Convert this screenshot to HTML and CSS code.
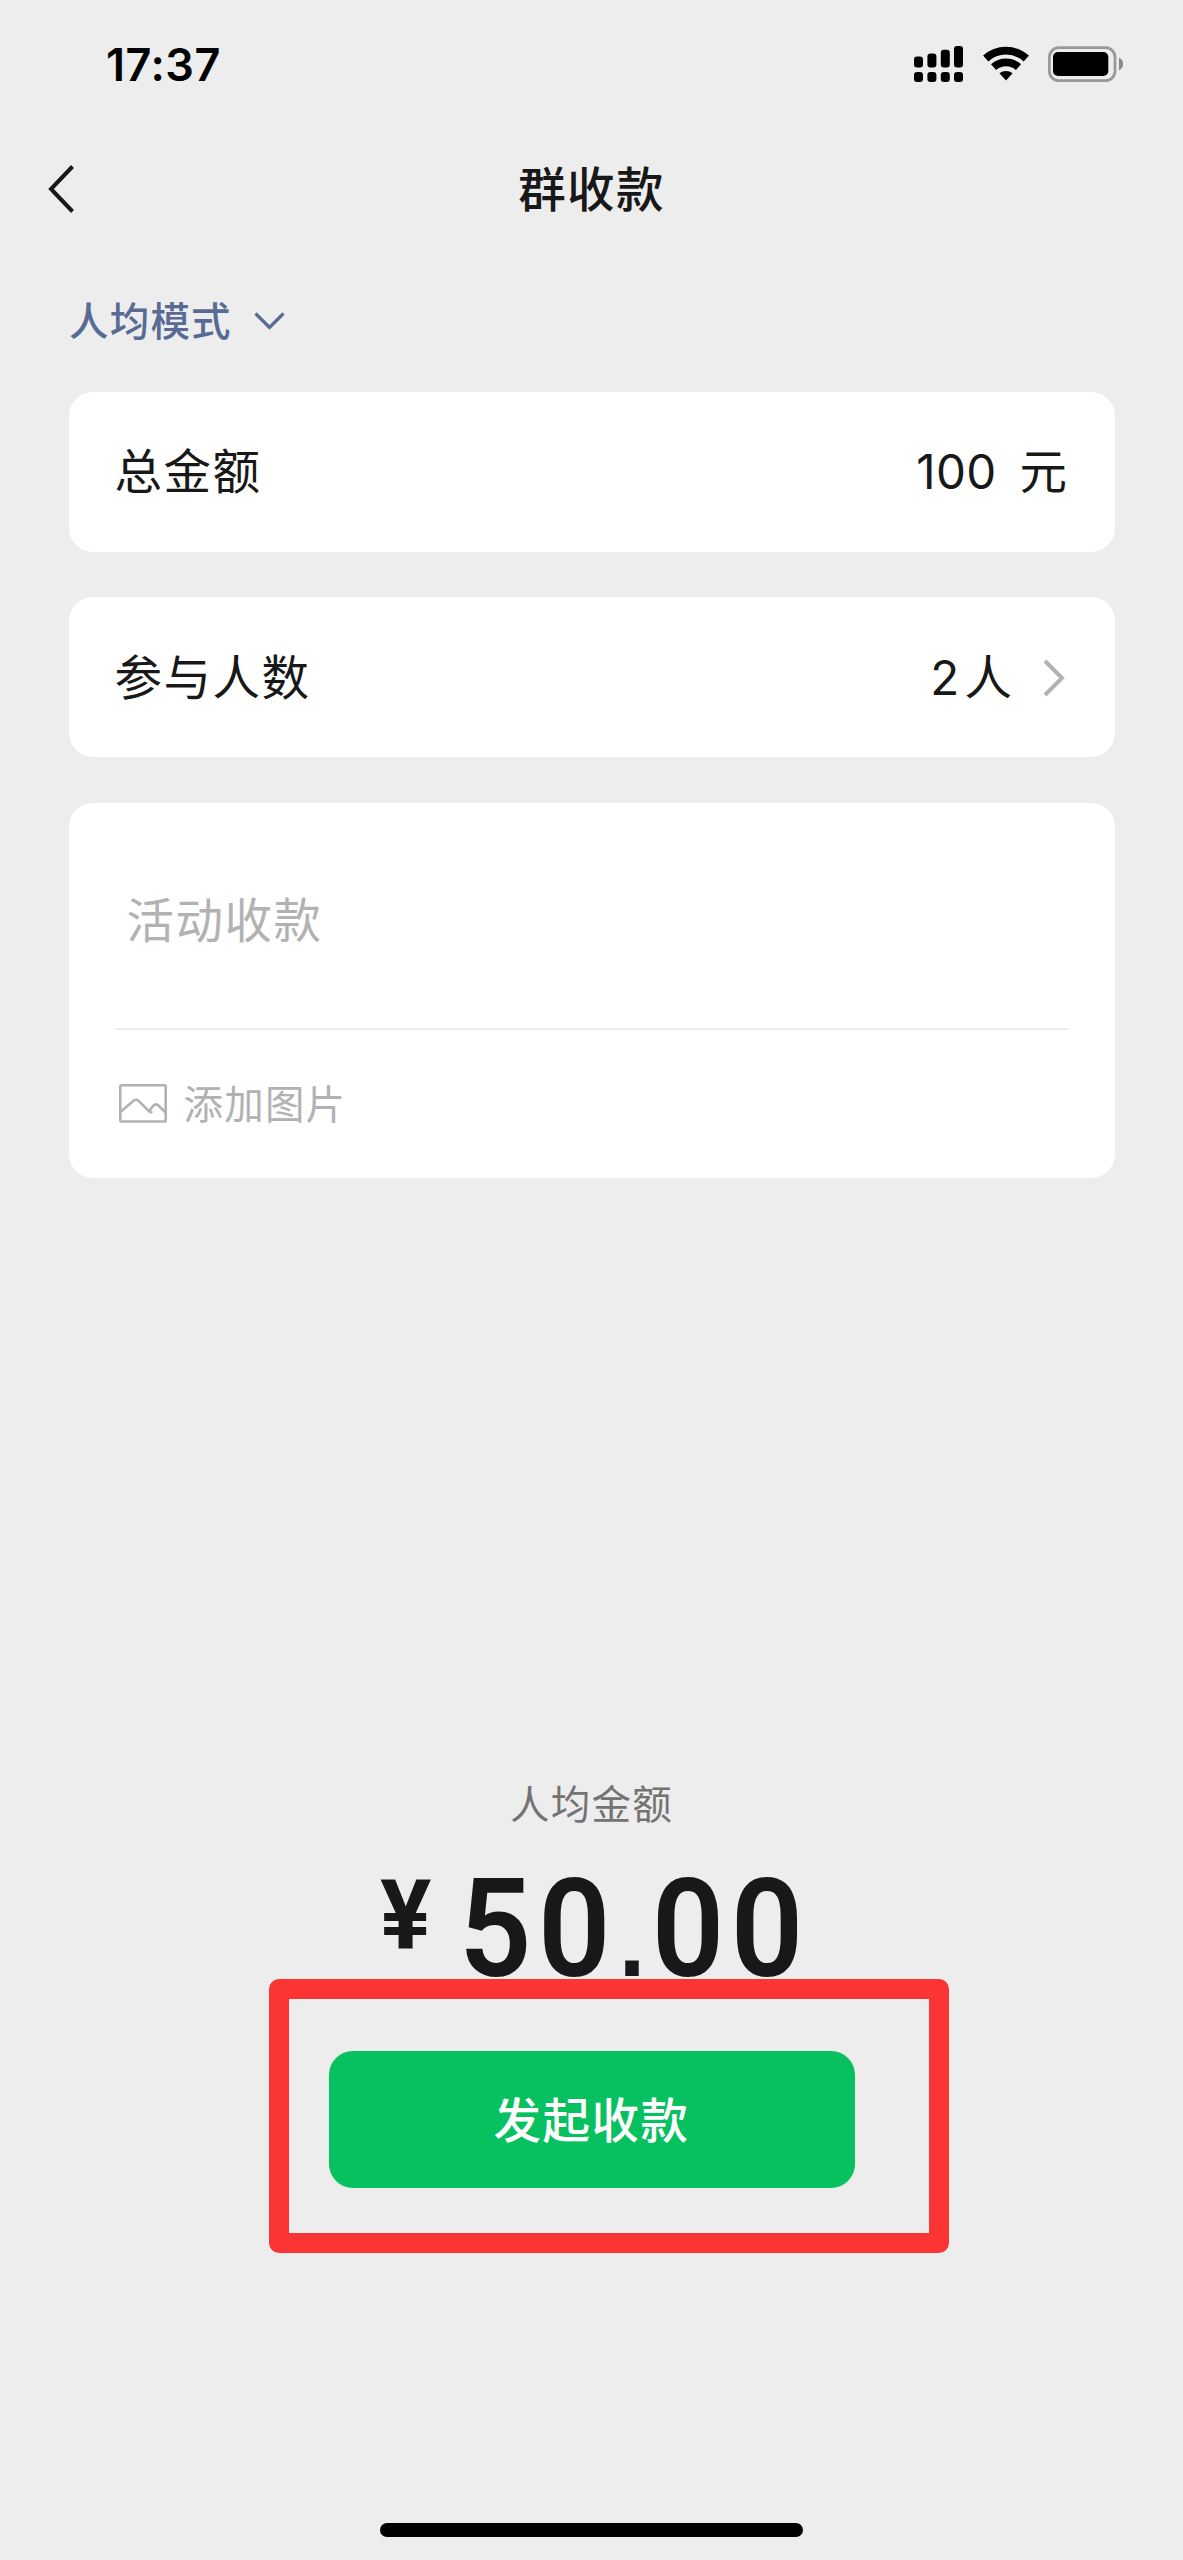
FILE: index.html
```html
<!DOCTYPE html>
<html lang="zh-CN">
<head>
<meta charset="utf-8">
<title>群收款</title>
<link rel="stylesheet" href="styles.css">
</head>
<body>
<div class="screen">
  <header class="status">
    <span class="time">17:37</span>
    <div class="indicators">
      <svg class="signal" width="49" height="36" viewBox="0 0 49 36">
        <rect x="0" y="10.5" width="9" height="11" rx="3"/><rect x="13.4" y="7.6" width="9" height="13.9" rx="3"/><rect x="26.8" y="3.8" width="9" height="17.7" rx="3"/><rect x="40" y="0" width="9" height="21.5" rx="3"/>
        <rect x="0" y="26" width="9" height="10" rx="3"/><rect x="13.4" y="26" width="9" height="10" rx="3"/><rect x="26.8" y="26" width="9" height="10" rx="3"/><rect x="40" y="26" width="9" height="10" rx="3"/>
      </svg>
      <svg class="wifi" width="46" height="36" viewBox="0 0 46 36">
        <path d="M2.7 12.5a30.3 30.3 0 0 1 40.6 0M10.6 21.2a18.6 18.6 0 0 1 24.8 0" fill="none" stroke="#000" stroke-width="7.8"/>
        <path d="M16.4 27.2a10.8 10.8 0 0 1 13.2 0L23 34.6z"/>
      </svg>
      <svg class="battery" width="75" height="36" viewBox="0 0 75 36">
        <rect x="1.4" y="1.7" width="65.6" height="33" rx="9.5" fill="none" stroke="#999" stroke-width="2.8"/>
        <rect x="5" y="6" width="55.3" height="24" rx="5"/>
        <path d="M71 11.6q4 2 4 6.4t-4 6.400z" fill="#8a8a8a"/>
      </svg>
    </div>
  </header>

  <nav class="nav">
    <svg class="back" width="27" height="50" viewBox="0 0 27 50"><path d="M24.500 2.500L3 25L24.500 47.500" fill="none" stroke="#181818" stroke-width="4"/></svg>
    <h1 class="title">群收款</h1>
  </nav>

  <div class="mode">
    <span>人均模式</span>
    <svg width="31" height="18" viewBox="0 0 31 18"><path d="M1.500 1.500L15.500 15.500L29.500 1.500" fill="none" stroke="#576b95" stroke-width="3.200"/></svg>
  </div>

  <main class="cards">
    <section class="card row">
      <span class="label">总金额</span>
      <span class="value"><span class="num">100</span><span class="yuan">元</span></span>
    </section>
    <section class="card row">
      <span class="label">参与人数</span>
      <span class="value"><span class="num">2</span><span class="people">人</span>
        <svg class="more" width="22" height="38" viewBox="0 0 22 38"><path d="M2 2L19 19L2 36" fill="none" stroke="#b2b2b2" stroke-width="4"/></svg>
      </span>
    </section>
    <section class="card note">
      <div class="placeholder">活动收款</div>
      <div class="picture">
        <svg width="48" height="39" viewBox="0 0 48 39" fill="none" stroke="#b2b2b2" stroke-width="2.600"><rect x="1.300" y="1.300" width="45.400" height="36.200" rx="1"/><path d="M2 27.500L14.500 16.800Q17 14.700 19.500 16.800L30 27.300Q31.300 28.400 33.500 28.200M30 27.300L34.500 21.500Q37 19.200 39.500 21.500L46 28"/></svg>
        <span class="picture-text">添加图片</span>
      </div>
    </section>
  </main>

  <section class="summary">
    <div class="per">人均金额</div>
    <div class="amount"><span class="yen">¥</span><span class="sum">50<span class="point">.</span>00</span></div>
    <div class="action">
      <button class="submit" type="button">发起收款</button>
      <div class="highlight"></div>
    </div>
  </section>
  <div class="home"></div>
</div>
</body>
</html>
```
FILE: styles.css
```css
* { box-sizing: border-box; }
body { margin: 0; background: #ededed; color: #181818; font-family: Inter, "Noto Sans CJK SC", sans-serif; }
svg { display: block; flex: none; }
.screen { width: 1183px; height: 2560px; display: flex; flex-direction: column; overflow: hidden; }
.status { height: 130px; display: flex; justify-content: space-between; align-items: center; padding: 0 60px 0 106px; }
.time { font-size: 45px; font-weight: 600; line-height: 50px; letter-spacing: .5px; color: #000; }
.indicators { display: flex; gap: 19.500px; align-items: center; margin-top: -2px; }
.nav { height: 117px; display: grid; grid-template-columns: 75px 1fr 75px; align-items: center; }
.back { margin-left: 48px; }
.title { margin: 2px 0 0; text-align: center; font-size: 47.500px; font-weight: 500; letter-spacing: 1.300px; line-height: 60px; }
.mode { height: 144.500px; display: flex; align-items: center; gap: 22px; padding: 0 0 2px 69px; color: #576b95; font-size: 39.500px; font-weight: 500; letter-spacing: 1.200px; }
.mode svg { margin-top: 5px; }
.cards { display: flex; flex-direction: column; gap: 45.500px; padding: 0 68px 0 68.500px; }
.card { background: #fff; border-radius: 24px; }
.row { height: 160px; display: flex; align-items: center; justify-content: space-between; padding: 1px 48px 0 46px; }
.label, .placeholder { font-size: 47.500px; letter-spacing: 1.500px; line-height: 60px; }
.value { display: flex; align-items: center; font-size: 47.500px; line-height: 60px; }
.num { letter-spacing: .3px; }
.yuan { margin-left: 23px; }
.people { margin: 0 31px 0 5px; }
.more { margin-right: 2px; }
.note { height: 375.500px; padding: 0 46px; color: #b2b2b2; }
.placeholder { height: 227.500px; padding: 88px 0 0 12px; border-bottom: 2px solid #ededed; }
.picture { height: 146px; display: flex; align-items: center; gap: 17px; padding-left: 4px; font-size: 39.500px; letter-spacing: 1.200px; }
.picture-text { margin-top: -3px; }
.summary { margin-top: 596.500px; display: flex; flex-direction: column; align-items: center; }
.per { font-size: 39.500px; line-height: 60px; letter-spacing: 1.200px; color: #737373; }
.amount { width: 423px; display: flex; align-items: flex-start; height: 140px; margin-top: 25px; font-family: Roboto, sans-serif; font-weight: 600; line-height: 1; }
.yen { flex: 0 0 79px; font-size: 96px; font-weight: 700; margin-top: 7px; }
.sum { flex: none; font-size: 138px; letter-spacing: 7px; transform: scaleX(.92); transform-origin: left; }
.point { margin-left: 2px; font-family: "Liberation Sans", sans-serif; font-weight: 700; font-size: 104px; line-height: 1; }
.action { position: relative; width: 526px; height: 137.500px; margin-top: 51px; }
.submit { display: block; width: 100%; height: 100%; border: 0; border-radius: 24px; padding: 0 0 3px; background: #07c160; color: #fff; font-family: inherit; font-size: 47.500px; font-weight: 500; letter-spacing: 1.500px; }
.highlight { position: absolute; left: -60px; top: -72px; width: 680px; height: 274px; border: 20px solid #fa3534; border-radius: 10px; pointer-events: none; }
.home { width: 423px; height: 14px; margin: auto auto 23px; border-radius: 7px; background: #000; }
```
